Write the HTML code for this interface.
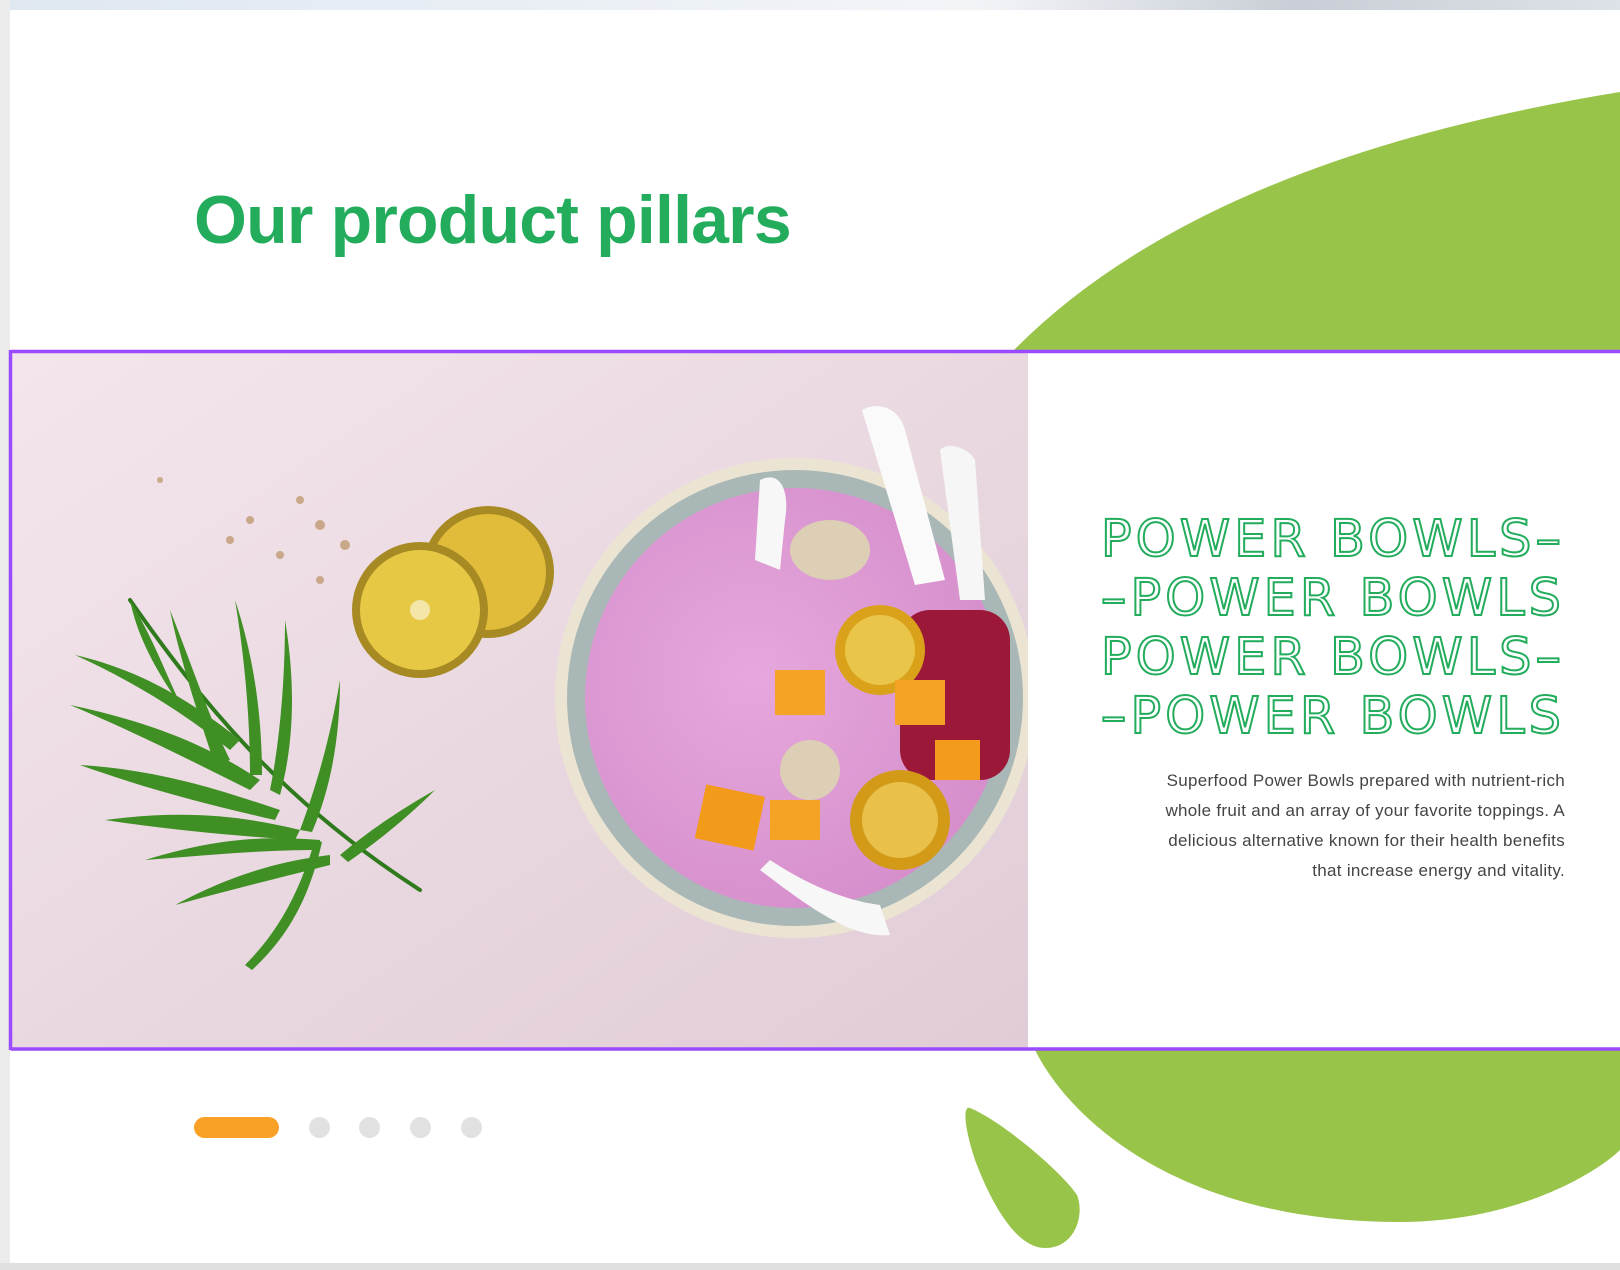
<!DOCTYPE html>
<html><head><meta charset="utf-8"><style>
html,body{margin:0;padding:0;background:#fff;}
body{width:1620px;height:1270px;position:relative;overflow:hidden;font-family:"Liberation Sans",sans-serif;}
.abs{position:absolute;}
h1{position:absolute;left:194px;top:180px;margin:0;font-size:68px;font-weight:bold;color:#22ac5c;letter-spacing:-0.8px;line-height:80px;}
.out{position:absolute;right:55px;top:510px;text-align:right;font-family:"DejaVu Sans","Liberation Sans",sans-serif;font-size:51px;line-height:59px;letter-spacing:4px;color:#fff;-webkit-text-stroke:2px #22ac5c;white-space:nowrap;}
.para{position:absolute;right:55px;top:766px;text-align:right;font-size:17px;letter-spacing:0.3px;line-height:30px;color:#444;white-space:nowrap;}
.dot{position:absolute;top:1117px;width:21px;height:21px;border-radius:50%;background:#e1e1e1;}
</style></head><body>
<svg class="abs" style="left:0;top:0" width="1620" height="1270" viewBox="0 0 1620 1270">
<defs>
<linearGradient id="tb" x1="0" x2="1"><stop offset="0" stop-color="#dfe7f1"/><stop offset="0.6" stop-color="#f2f5f8"/><stop offset="0.8" stop-color="#c9ced6"/><stop offset="1" stop-color="#dde2e8"/></linearGradient>
<linearGradient id="pk" x1="0" y1="0" x2="1" y2="1"><stop offset="0" stop-color="#f4e5ec"/><stop offset="1" stop-color="#e0ccd6"/></linearGradient>
<radialGradient id="sm" cx="0.4" cy="0.45" r="0.6"><stop offset="0" stop-color="#e6a8dc"/><stop offset="1" stop-color="#d68fcc"/></radialGradient>
<clipPath id="ph"><rect x="12" y="353" width="1016" height="695"/></clipPath>
</defs>
<rect x="0" y="0" width="1620" height="10" fill="url(#tb)"/>
<rect x="0" y="0" width="10" height="1270" fill="#ebebeb"/>
<rect x="0" y="1263" width="1620" height="7" fill="#e0e0e0"/>
<path d="M1012 352 Q1200 160 1620 92 L1620 352 Z" fill="#99c44a"/>
<path d="M1035 1050 C1070 1120 1180 1222 1400 1222 C1520 1222 1600 1170 1620 1150 L1620 1050 Z" fill="#99c44a"/>
<path d="M970 1108 C1000 1120 1060 1170 1077 1195 C1085 1215 1075 1248 1045 1248 C1015 1248 990 1200 975 1160 C965 1130 962 1105 970 1108 Z" fill="#99c44a"/>
<rect x="12" y="353" width="1016" height="695" fill="url(#pk)"/>
<g clip-path="url(#ph)">
<circle cx="795" cy="698" r="240" fill="#ece4d2"/>
<circle cx="795" cy="698" r="228" fill="#a9b8b6"/>
<circle cx="795" cy="698" r="210" fill="url(#sm)"/>
<rect x="900" y="610" width="110" height="170" rx="30" fill="#9b1838"/>
<circle cx="880" cy="650" r="45" fill="#d9a21a"/><circle cx="880" cy="650" r="35" fill="#e9c54a"/>
<circle cx="900" cy="820" r="50" fill="#d39a18"/><circle cx="900" cy="820" r="38" fill="#e8c04a"/>
<rect x="700" y="790" width="60" height="55" fill="#f29a1a" transform="rotate(12 730 817)"/>
<rect x="775" y="670" width="50" height="45" fill="#f5a325"/>
<rect x="895" y="680" width="50" height="45" fill="#f5a325"/>
<rect x="935" y="740" width="45" height="40" fill="#f39b1c"/>
<rect x="770" y="800" width="50" height="40" fill="#f5a325"/>
<path d="M862 410 C880 400 900 410 905 430 L945 580 L915 585 Z" fill="#fafafa"/>
<path d="M940 450 C950 440 970 450 975 460 L985 600 L960 600 Z" fill="#f6f6f6"/>
<path d="M760 480 C780 470 790 490 785 520 L780 570 L755 560 Z" fill="#f7f7f7"/>
<path d="M760 870 C800 900 850 940 890 935 L880 905 C840 900 800 880 770 860 Z" fill="#f7f7f7"/>
<ellipse cx="830" cy="550" rx="40" ry="30" fill="#dccfb5"/>
<ellipse cx="810" cy="770" rx="30" ry="30" fill="#dccfb5"/>
</g>
<circle cx="488" cy="572" r="66" fill="#a88a24"/><circle cx="488" cy="572" r="58" fill="#e0bc3a"/>
<circle cx="420" cy="610" r="68" fill="#a88a24"/><circle cx="420" cy="610" r="60" fill="#e6c845"/><circle cx="420" cy="610" r="10" fill="#f3e6a8"/>
<g fill="#c9a88a"><circle cx="250" cy="520" r="4"/><circle cx="300" cy="500" r="4"/><circle cx="320" cy="525" r="5"/><circle cx="345" cy="545" r="5"/><circle cx="230" cy="540" r="4"/><circle cx="280" cy="555" r="4"/><circle cx="320" cy="580" r="4"/><circle cx="160" cy="480" r="3"/></g>
<g stroke="#2f7a1c" fill="none" stroke-width="4" stroke-linecap="round">
<path d="M130 600 C200 700 280 800 420 890"/>
</g>
<g fill="#3f8f24">
<path d="M130 600 C160 650 175 700 190 720 C170 690 140 650 130 600Z"/>
<path d="M170 610 C190 660 210 720 230 760 L215 765 C200 720 180 660 170 610Z"/>
<path d="M75 655 C140 670 190 700 240 740 L230 750 C180 710 130 680 75 655Z"/>
<path d="M70 705 C140 720 200 740 260 780 L250 790 C190 760 130 730 70 705Z"/>
<path d="M80 765 C160 770 220 790 280 810 L275 820 C210 805 150 790 80 765Z"/>
<path d="M105 820 C180 810 240 815 300 830 L295 840 C230 835 170 830 105 820Z"/>
<path d="M145 860 C210 840 260 835 320 840 L320 850 C260 850 210 855 145 860Z"/>
<path d="M175 905 C240 870 290 860 330 855 L330 865 C290 875 230 890 175 905Z"/>
<path d="M285 620 C285 680 280 740 270 790 L280 795 C295 740 295 680 285 620Z"/>
<path d="M235 600 C245 660 250 720 250 775 L262 775 C262 720 255 660 235 600Z"/>
<path d="M340 680 C330 740 315 790 300 830 L312 832 C330 790 340 740 340 680Z"/>
<path d="M435 790 C400 810 370 830 340 855 L348 862 C380 840 410 815 435 790Z"/>
<path d="M315 840 C300 890 280 930 245 965 L252 970 C290 935 310 895 322 842Z"/>
</g>
<path d="M10.5 351.5 L1620 351.5 M10.5 1049 L1620 1049 M10.5 350 L10.5 1050" stroke="#9b4bff" stroke-width="3.5" fill="none"/>
</svg>
<h1>Our product pillars</h1>
<div class="out">POWER BOWLS–<br>–POWER BOWLS<br>POWER BOWLS–<br>–POWER BOWLS</div>
<div class="para">Superfood Power Bowls prepared with nutrient-rich<br>whole fruit and an array of your favorite toppings. A<br>delicious alternative known for their health benefits<br>that increase energy and vitality.</div>
<div class="abs" style="left:194px;top:1117px;width:85px;height:21px;border-radius:11px;background:#f9a127"></div>
<div class="dot" style="left:309px"></div>
<div class="dot" style="left:359px"></div>
<div class="dot" style="left:410px"></div>
<div class="dot" style="left:461px"></div>
</body></html>
